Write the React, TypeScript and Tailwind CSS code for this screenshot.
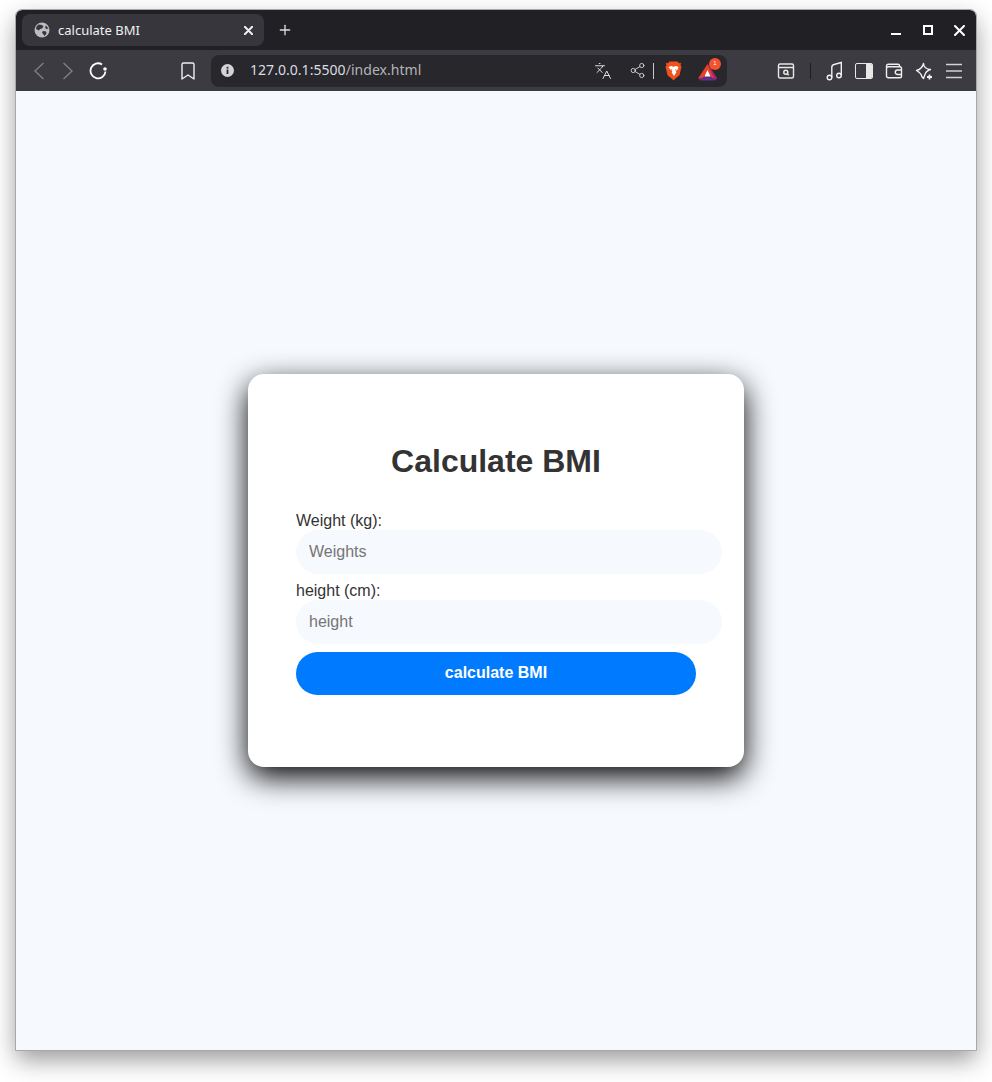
import { Languages, Plus, Share2 } from "lucide-react";

const font = "font-['Liberation_Sans',Arial,sans-serif]";

function GlobeIcon() {
  return (
    <svg width="16" height="16" viewBox="0 0 16 16">
      <circle cx="8" cy="8" r="7.500" fill="#bdbdc0" />
      <path d="M4.500 2.500 8 3l1.500 1.500L8 6.500l-2 .5-1 1.500L2 7l.5-2.500zM9 9l3 .5.500 2-2 2.500-1-1.500-1.500-2zM12 3.500l2.500 3-2.500.5-1-2z" fill="#36363c" />
    </svg>
  );
}

function WindowClose({ size = 11, width = 2 }: { size?: number; width?: number }) {
  return (
    <svg width={size} height={size} viewBox="0 0 11 11" fill="none" stroke="currentColor" strokeWidth={width} strokeLinecap="round">
      <path d="M1 1l9 9M10 1l-9 9" />
    </svg>
  );
}

function Chevron({ flip }: { flip?: boolean }) {
  return (
    <svg width="12" height="18" viewBox="0 0 12 18" fill="none" stroke="#7f7f84" strokeWidth="1.400" className={flip ? "-scale-x-100" : ""}>
      <path d="M10.500 1 2 9l8.500 8" />
    </svg>
  );
}

function ReloadIcon() {
  return (
    <svg width="18" height="18" viewBox="0 0 18 18" fill="none" stroke="#fff" strokeWidth="1.800">
      <path d="M13 2.400A7.500 7.500 0 1 0 16.500 9.500" />
      <circle cx="16" cy="7" r="1.800" fill="#fff" stroke="none" />
    </svg>
  );
}

function BookmarkIcon() {
  return (
    <svg width="14" height="18" viewBox="0 0 14 18" fill="none" stroke="#f0f0f0" strokeWidth="1.400" strokeLinejoin="round">
      <path d="M2.500 1h9A1.500 1.500 0 0 1 13 2.500V17l-6-4-6 4V2.500A1.500 1.500 0 0 1 2.500 1z" />
    </svg>
  );
}

function InfoIcon() {
  return (
    <svg width="15" height="15" viewBox="0 0 15 15">
      <circle cx="7.500" cy="7.500" r="6.500" fill="#d4d4d6" />
      <rect x="6.600" y="6.500" width="1.800" height="4.500" fill="#27272c" />
      <rect x="6.600" y="3.800" width="1.800" height="1.800" fill="#27272c" />
    </svg>
  );
}

function BraveLogo() {
  return (
    <svg width="17" height="20" viewBox="0 0 17 20">
      <path d="M4.500.5h8l1.500 1.700 2-.4-.4 2.600.9 1.400-2 8.400-4 3.300-2 1.700-2-1.700-4-3.300-2-8.400.9-1.400L1 1.800l2 .4z" fill="#f1511b" />
      <path d="M3.500 6 6 5l2.500.8L11 5l2.500 1-.8 2.500-2 1.500.6 1.500-2.300 3.500-2.300-3.500.6-1.500-2-1.500z" fill="#fff" />
      <path d="M5.800 8l1.500.6-.6 1zM11.200 8l-1.500.6.6 1z" fill="#f1511b" />
    </svg>
  );
}

function RewardsLogo() {
  return (
    <div className="relative h-5 w-5">
      <svg width="20" height="17" viewBox="0 0 20 17" className="mt-[3px]">
        <path d="M9.500 0 19 14.500H0z" fill="#e8412a" />
        <path d="M9.500 0 19 14.500l-2.500 1.500z" fill="#a5287a" />
        <path d="M0 14.500h19l-2 2H2.500z" fill="#6a2b91" />
        <path d="M4 14.500 9.500 9l5.500 5.500z" fill="#5b2d8e" />
        <path d="M6.500 12.500 9.500 6l3 6.500z" fill="#fff" />
      </svg>
      <span className={`absolute -top-[3px] left-[11px] flex h-3 w-3 items-center justify-center rounded-full bg-[#f4512c] text-[6px] text-white ${font}`}>
        1
      </span>
    </div>
  );
}

function SearchTabIcon() {
  return (
    <svg width="18" height="18" viewBox="0 0 18 18" fill="none" stroke="#e8e8e8" strokeWidth="1.400">
      <rect x="1.500" y="2" width="15" height="14" rx="1.500" />
      <path d="M1.500 5.500h15" />
      <circle cx="8.800" cy="10.200" r="2" strokeWidth="1.500" />
      <path d="m10.300 11.700 1.500 1.500" strokeWidth="1.500" />
    </svg>
  );
}

function MusicIcon() {
  return (
    <svg width="18" height="20" viewBox="0 0 18 20" fill="none" stroke="#f0f0f0" strokeWidth="1.400">
      <circle cx="3.500" cy="16.500" r="2.300" />
      <circle cx="13" cy="14.500" r="2.300" />
      <path d="M5.800 16.500V6.500Q5.800 4 8 3.500L15.300 1.500V14.500" />
    </svg>
  );
}

function SidebarIcon() {
  return (
    <div className="flex h-4 w-[18px] overflow-hidden rounded-[2px] border-[1.5px] border-[#e8e8e8]">
      <div className="flex-1" />
      <div className="w-[6px] bg-[#e8e8e8]" />
    </div>
  );
}

function WalletIcon() {
  return (
    <svg width="18" height="18" viewBox="0 0 18 18" fill="none" stroke="#f0f0f0" strokeWidth="1.400" strokeLinejoin="round">
      <path d="M1.500 5.500V4A1.800 1.800 0 0 1 3.300 2.200H13a1.500 1.500 0 0 1 1.500 1.500v1.300" />
      <rect x="1.500" y="4.800" width="15" height="11" rx="1.800" />
      <path d="M16.500 8h-4a2 2 0 0 0 0 4.500h4" />
    </svg>
  );
}

function LeoIcon() {
  return (
    <svg width="18" height="20" viewBox="0 0 18 20" fill="none" stroke="#f0f0f0" strokeWidth="1.400" strokeLinejoin="round">
      <path d="M8.500 2.500C8.800 6 11 8.200 15.500 8.500 12.500 9.500 10.800 11 10.200 13L8.500 17.500 6.800 15.500C6.500 13 4 11 1.500 9.500 5 8.500 7.800 6 8.500 2.500z" />
      <path d="M14.500 13.500v5M12 16h5" strokeWidth="1.800" />
    </svg>
  );
}

function MenuIcon() {
  return (
    <svg width="18" height="16" viewBox="0 0 18 16" fill="none" stroke="#d2d2d4" strokeWidth="1.700">
      <path d="M1 1.500h16M1 8h16M1 14.500h16" />
    </svg>
  );
}

function Slot({ w, children }: { w: string; children: React.ReactNode }) {
  return <div className={`flex shrink-0 items-center justify-center ${w}`}>{children}</div>;
}

export default function App() {
  return (
    <div className="h-[1082px] bg-white px-4 pt-[10px] pb-8">
      <div className="flex h-[1040px] flex-col overflow-hidden rounded-t-[6px] shadow-[0_10px_25px_rgba(0,0,0,0.4)] outline-1 outline-[#a8a8a8]">
        {/* Tab strip */}
        <div className="flex h-10 shrink-0 items-center bg-[#202025] pl-[6px] font-['Noto_Sans',sans-serif]">
          <div className="flex h-8 w-[242px] items-center rounded-lg bg-[#36363c] pl-[12px] pr-[11px] text-[#f0f0f0]">
            <GlobeIcon />
            <span className="ml-2 flex-1 pt-px text-[13px]">calculate BMI</span>
            <WindowClose size={9} width={2.4} />
          </div>
          <Plus size={16} className="ml-[13px] text-[#dedede]" />
          <div className="ml-auto flex items-center text-white">
            <Slot w="w-8">
              <div className="mt-2 h-[2px] w-[10px] bg-white" />
            </Slot>
            <Slot w="w-8">
              <div className="h-[10px] w-[10px] border-2 border-white" />
            </Slot>
            <Slot w="w-8">
              <div className="-ml-[2px]">
                <WindowClose />
              </div>
            </Slot>
          </div>
        </div>

        {/* Toolbar */}
        <div className="flex h-[41px] shrink-0 items-center bg-[#3b3b41] pl-2 font-['Noto_Sans',sans-serif]">
          <Slot w="w-[30px]">
            <Chevron />
          </Slot>
          <Slot w="w-7">
            <Chevron flip />
          </Slot>
          <Slot w="w-8">
            <ReloadIcon />
          </Slot>
          <div className="ml-[59px]">
            <Slot w="w-[30px]">
              <BookmarkIcon />
            </Slot>
          </div>
          <div className="ml-2 flex h-8 w-[516px] shrink-0 items-center rounded-lg bg-[#27272c] pl-[9px] pr-1">
            <InfoIcon />
            <span className="ml-[15px] -mt-[2px] flex-1 text-[14px] tracking-[0.04px] text-[#b4b4b8]">
              <span className="text-[#dcdce0]">127.0.0.1:5500</span>/index.html
            </span>
            <Slot w="w-[34px]">
              <Languages size={18} strokeWidth={1.3} className="text-[#e0e0e0]" />
            </Slot>
            <Slot w="w-[34px]">
              <Share2 size={17} strokeWidth={1.2} className="text-[#e0e0e0]" />
            </Slot>
            <div className="-ml-px h-4 w-px bg-[#c8c8c8]" />
            <div className="ml-1">
              <Slot w="w-[30px]">
                <BraveLogo />
              </Slot>
            </div>
            <div className="ml-[5px]">
              <Slot w="w-[30px]">
                <RewardsLogo />
              </Slot>
            </div>
          </div>
          <div className="ml-11">
            <Slot w="w-[30px]">
              <SearchTabIcon />
            </Slot>
          </div>
          <div className="ml-[9px] h-4 w-px bg-[#1d1d20]" />
          <div className="ml-[9px]">
            <Slot w="w-[30px]">
              <MusicIcon />
            </Slot>
          </div>
          <div className="-ml-px">
            <Slot w="w-[30px]">
              <SidebarIcon />
            </Slot>
          </div>
          <Slot w="w-[30px]">
            <WalletIcon />
          </Slot>
          <Slot w="w-[30px]">
            <LeoIcon />
          </Slot>
          <Slot w="w-[30px]">
            <MenuIcon />
          </Slot>
        </div>

        {/* Page */}
        <div className={`flex flex-1 items-center justify-center bg-[#f6f9fe] pb-px ${font}`}>
          <div className="flex h-[393px] w-[496px] flex-col rounded-2xl bg-white px-12 pt-16 shadow-[0_10px_30px_#000]">
            <h1 className="h-[46px] text-center text-[32px] font-bold leading-[46px] text-[#333333]">Calculate BMI</h1>
            <label className="mt-7 text-base leading-[18px] text-[#333333]">Weight (kg):</label>
            <input
              placeholder="Weights"
              className="h-11 w-[426px] shrink-0 rounded-[22px] bg-[#f6f9fe] px-[13px] text-base outline-none placeholder:text-[#757575]"
            />
            <label className="mt-2 text-base leading-[18px] text-[#333333]">height (cm):</label>
            <input
              placeholder="height"
              className="h-11 w-[426px] shrink-0 rounded-[22px] bg-[#f6f9fe] px-[13px] text-base outline-none placeholder:text-[#757575]"
            />
            <button className="mt-2 h-[43px] w-[400px] shrink-0 rounded-[22px] bg-[#007bff] text-base font-bold text-white">
              calculate BMI
            </button>
          </div>
        </div>
      </div>
    </div>
  );
}
